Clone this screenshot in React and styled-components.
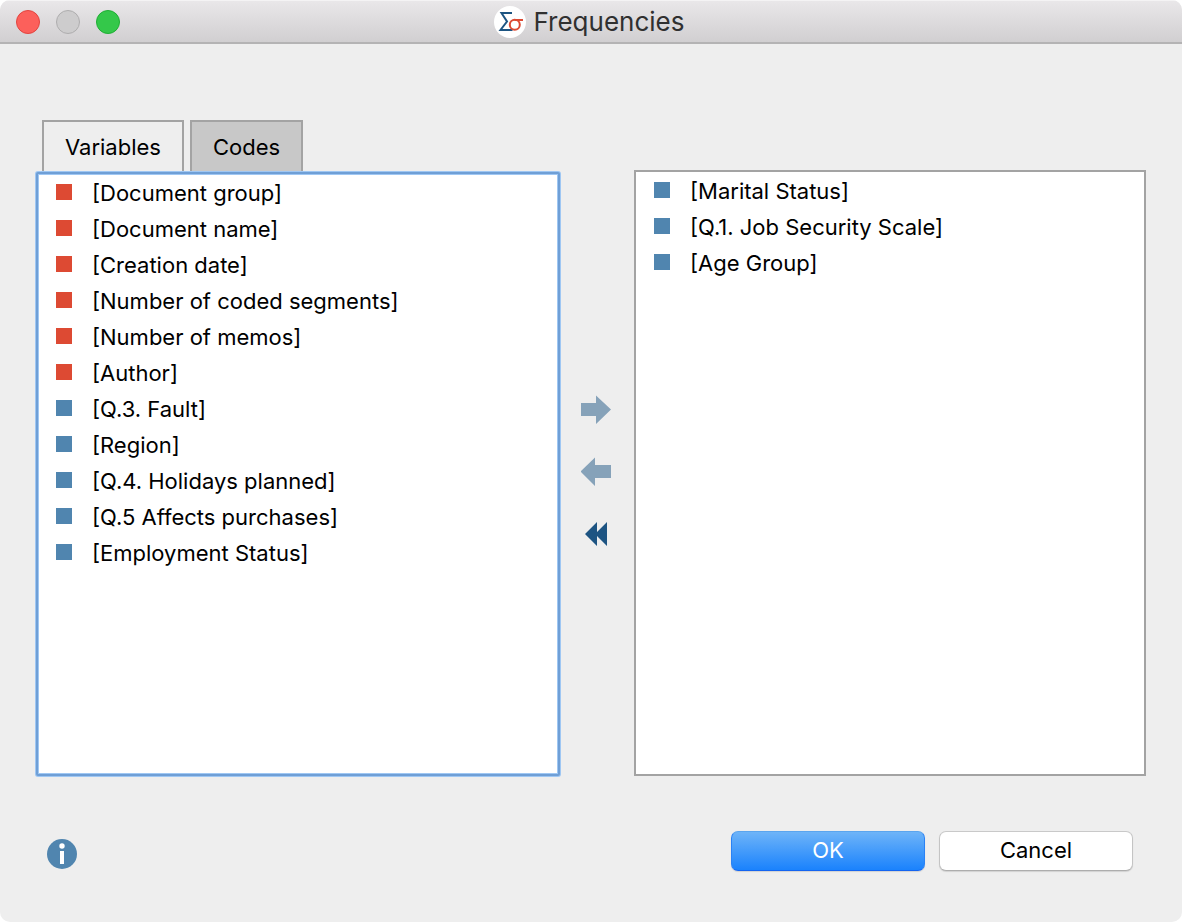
import React, { useState } from "react";
import styled, { createGlobalStyle } from "styled-components";

const GlobalStyle = createGlobalStyle`
  * {
    box-sizing: border-box;
  }

  body {
    margin: 0;
    background: white;
    font-family: Inter, "Liberation Sans", sans-serif;
    font-size: 22px;
    color: black;
  }

  button {
    font: inherit;
    color: inherit;
    padding: 0;
  }
`;

const Window = styled.div`
  display: flex;
  flex-direction: column;
  min-height: 100vh;
  background: #eeeeee;
  border-radius: 10px;
  overflow: hidden;
`;

const TitleBar = styled.header`
  display: grid;
  grid-template-columns: 1fr auto 1fr;
  align-items: center;
  height: 44px;
  padding: 0 20px 0 16px;
  background: linear-gradient(#e9e7e9, #d1cfd1);
  border-top: 1px solid #f4f3f4;
  border-bottom: 2px solid #b4b3b4;
`;

const Lights = styled.div`
  display: flex;
  gap: 16px;
`;

const Light = styled.button`
  width: 24px;
  height: 24px;
  border-radius: 50%;
  border: 1px solid ${(props) => props.$border};
  background: ${(props) => props.$color};
`;

const Title = styled.h1`
  display: flex;
  align-items: center;
  gap: 8px;
  margin: 0;
  font-size: 26px;
  line-height: 32px;
  font-weight: 400;
  color: #303030;
`;

const Panels = styled.main`
  flex: 1;
  display: grid;
  grid-template-columns: 524fr 74px 512fr;
  padding: 76px 36px 0;
`;

const Source = styled.section`
  display: flex;
  flex-direction: column;
`;

const Tabs = styled.div`
  display: flex;
  gap: 6px;
  padding: 0 6px;
`;

const Tab = styled.button`
  height: 52px;
  padding: 0 21px;
  border: 2px solid #a3a3a3;
  border-bottom: none;
  background: ${(props) => (props.$active ? "#eeeeee" : "#c8c8c8")};
`;

const List = styled.ul`
  flex: 1;
  margin: 0;
  padding: 0;
  list-style: none;
  background: white;
  border: 2px solid ${(props) => (props.$focused ? "#6f9fd6" : "#a3a3a3")};
  box-shadow: ${(props) =>
    props.$focused ? "0 0 0 1px #9fc7f3, inset 0 0 0 1px #9fc7f3" : "none"};
  border-radius: ${(props) => (props.$focused ? "2px" : "0")};
`;

const Item = styled.li`
  display: flex;
  align-items: center;
  gap: 20px;
  height: 36px;
  padding: 0 18px;
  white-space: nowrap;

  &::before {
    content: "";
    width: 16px;
    height: 16px;
    background: ${(props) => (props.$system ? "#dd4a33" : "#5085af")};
  }
`;

const Label = styled.span`
  padding-top: 2px;
`;

const Target = styled.section`
  display: flex;
  flex-direction: column;
  padding-top: 50px;
`;

const Movers = styled.div`
  display: flex;
  flex-direction: column;
  justify-content: center;
  align-items: center;
  gap: 30px;
  padding-top: 48px;
`;

const IconButton = styled.button`
  display: flex;
  border: none;
  background: none;
`;

const Footer = styled.footer`
  display: flex;
  align-items: flex-end;
  justify-content: space-between;
  padding: 55px 49px 51px 46px;
`;

const Actions = styled.div`
  display: flex;
  gap: 14px;
`;

const Action = styled.button`
  width: 194px;
  height: 40px;
  padding-bottom: 2px;
  border-radius: 7px;
  border: 1px solid;
  border-color: ${(props) =>
    props.$primary ? "#5ba5ee #2a82f5 #1464f0" : "#c9c9c9 #c4c4c4 #adadad"};
  background: ${(props) =>
    props.$primary ? "linear-gradient(#6eb4f8, #1a82fd)" : "white"};
  color: ${(props) => (props.$primary ? "white" : "black")};
  box-shadow: 0 1px 1px rgba(0, 0, 0, 0.12);
`;

const variables = [
  { name: "Document group", system: true },
  { name: "Document name", system: true },
  { name: "Creation date", system: true },
  { name: "Number of coded segments", system: true },
  { name: "Number of memos", system: true },
  { name: "Author", system: true },
  { name: "Q.3. Fault" },
  { name: "Region" },
  { name: "Q.4. Holidays planned" },
  { name: "Q.5 Affects purchases" },
  { name: "Employment Status" },
];

const selected = [
  { name: "Marital Status" },
  { name: "Q.1. Job Security Scale" },
  { name: "Age Group" },
];

const Logo = () => (
  <svg width="32" height="32" viewBox="0 0 32 32" aria-hidden="true">
    <circle cx="16" cy="16" r="16" fill="white" />
    <path
      d="M18 7H7.5L13 15.5L6.5 24H18.5"
      fill="none"
      stroke="#1d5482"
      strokeWidth="2"
    />
    <circle cx="20.8" cy="18.8" r="5" fill="white" stroke="#dd4a33" strokeWidth="2" />
    <path d="M20.5 14H29" stroke="#dd4a33" strokeWidth="2" />
  </svg>
);

const ArrowRight = () => (
  <svg width="32" height="32" viewBox="0 0 32 32" aria-hidden="true">
    <path d="M0 9H15V1.5L30 15.5L15 30V22H0Z" fill="#86a2b9" />
  </svg>
);

const ArrowLeft = () => (
  <svg width="32" height="32" viewBox="0 0 32 32" aria-hidden="true">
    <path d="M30 9H14V1.5L-0.5 15.5L14 30V22H30Z" fill="#86a2b9" />
  </svg>
);

const DoubleLeft = () => (
  <svg width="32" height="32" viewBox="0 0 32 32" aria-hidden="true">
    <path d="M4 16L16 4V14L26 4V28L16 18V28Z" fill="#1d5482" />
  </svg>
);

const Info = () => (
  <svg width="32" height="32" viewBox="0 0 32 32" aria-hidden="true">
    <circle cx="16" cy="15" r="15" fill="#5085af" />
    <circle cx="16" cy="7" r="2.7" fill="white" />
    <path d="M14 12H18V25H14Z" fill="white" />
  </svg>
);

const Items = ({ items }) =>
  items.map((item) => (
    <Item key={item.name} $system={item.system}>
      <Label>[{item.name}]</Label>
    </Item>
  ));

export default function App() {
  const [tab, setTab] = useState("Variables");

  return (
    <>
      <GlobalStyle />
      <Window>
        <TitleBar>
          <Lights>
            <Light aria-label="Close" $color="#fc605b" $border="#e2443f" />
            <Light aria-label="Minimize" $color="#cdcccd" $border="#aeadae" />
            <Light aria-label="Zoom" $color="#34c84a" $border="#1fae34" />
          </Lights>
          <Title>
            <Logo />
            Frequencies
          </Title>
        </TitleBar>
        <Panels>
          <Source>
            <Tabs role="tablist">
              {["Variables", "Codes"].map((name) => (
                <Tab
                  key={name}
                  role="tab"
                  aria-selected={tab === name}
                  $active={tab === name}
                  onClick={() => setTab(name)}
                >
                  {name}
                </Tab>
              ))}
            </Tabs>
            <List $focused>
              <Items items={variables} />
            </List>
          </Source>
          <Movers>
            <IconButton aria-label="Add">
              <ArrowRight />
            </IconButton>
            <IconButton aria-label="Remove">
              <ArrowLeft />
            </IconButton>
            <IconButton aria-label="Remove all">
              <DoubleLeft />
            </IconButton>
          </Movers>
          <Target>
            <List>
              <Items items={selected} />
            </List>
          </Target>
        </Panels>
        <Footer>
          <IconButton aria-label="Info">
            <Info />
          </IconButton>
          <Actions>
            <Action $primary>OK</Action>
            <Action>Cancel</Action>
          </Actions>
        </Footer>
      </Window>
    </>
  );
}
